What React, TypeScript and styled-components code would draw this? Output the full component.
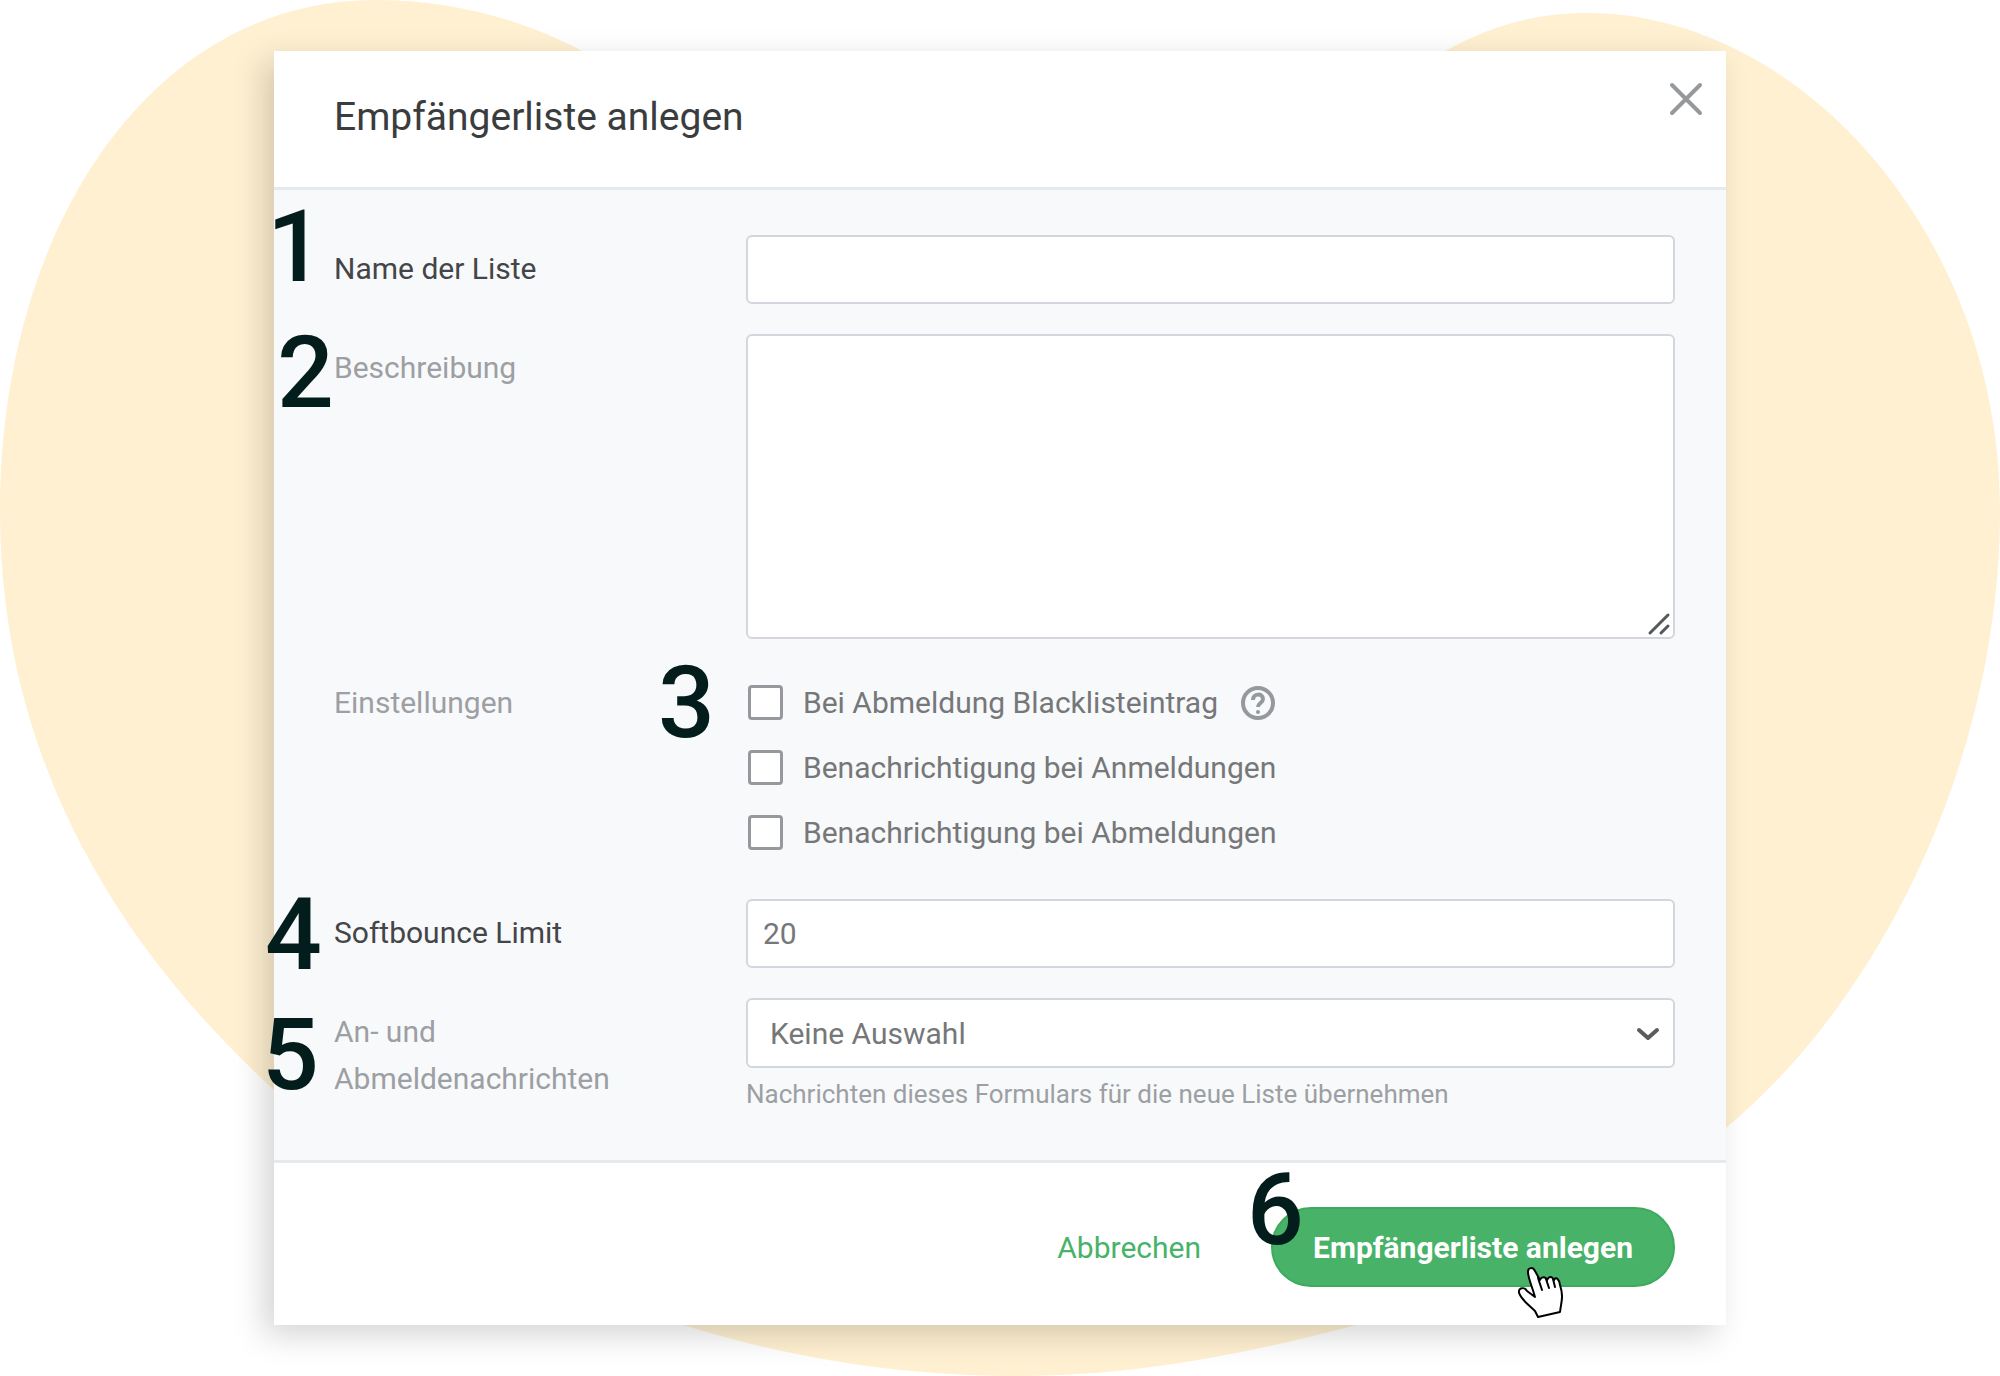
import React from 'react';
import styled, { createGlobalStyle } from 'styled-components';

const GlobalStyle = createGlobalStyle`
  *, *::before, *::after { box-sizing: border-box; }
  body {
    margin: 0;
    background: #fff;
    font-family: Roboto, "Liberation Sans", sans-serif;
    font-size: 30px;
    line-height: 47px;
  }
`;

const Stage = styled.main`
  position: relative;
  min-height: 100vh;
  padding: 51px 24px;
  overflow: hidden;
`;

const Backdrop = styled.svg`
  position: absolute;
  inset: 0;
  width: 100%;
  height: 100%;
`;

const Dialog = styled.section`
  position: relative;
  max-width: 1452px;
  margin: 0 auto;
  background: #fff;
  box-shadow: -10px 10px 30px rgba(0, 0, 0, 0.17);
`;

const Header = styled.header`
  display: flex;
  justify-content: space-between;
  align-items: flex-start;
  padding: 30px 23px 29px 60px;
  border-bottom: 3px solid #e6eaef;
`;

const Title = styled.h1`
  margin: 0;
  padding: 13px 0 17px;
  font-size: 39px;
  font-weight: 400;
  line-height: 47px;
  color: #3a3c3e;
`;

const CloseButton = styled.button`
  display: flex;
  padding: 0;
  border: 0;
  background: none;
  cursor: pointer;
`;

const Form = styled.form`
  margin: 0;
`;

const Fields = styled.div`
  display: flex;
  flex-direction: column;
  gap: 30px;
  padding: 45px 51px 50px 60px;
  background: #f8f9fb;
  border-bottom: 3px solid #e6eaef;
`;

const Row = styled.div`
  position: relative;
  display: grid;
  grid-template-columns: 412px minmax(0, 1fr);
  align-items: start;
`;

const Label = styled.label<{ $required?: boolean }>`
  max-width: 320px;
  padding-top: 10px;
  color: ${(p) => (p.$required ? '#434548' : '#9c9fa3')};
`;

const Control = styled.div`
  position: relative;
  display: flex;
  flex-direction: column;
`;

const fieldLook = `
  width: 100%;
  border: 2px solid #d3d6dc;
  border-radius: 6px;
  background: #fff;
  color: #757779;
  font: inherit;
  outline: none;
`;

const TextInput = styled.input`
  ${fieldLook}
  height: 69px;
  padding: 0 15px;
`;

const TextArea = styled.textarea`
  ${fieldLook}
  display: block;
  height: 305px;
  padding: 10px 15px;
  resize: none;
`;

const Select = styled.select`
  ${fieldLook}
  height: 70px;
  padding: 0 56px 0 22px;
  appearance: none;
`;

const ResizeGrip = styled.svg`
  position: absolute;
  right: 3px;
  bottom: 3px;
`;

const Chevron = styled.svg`
  position: absolute;
  right: 14px;
  top: 28px;
  pointer-events: none;
`;

const Hint = styled.small`
  margin-top: 10px;
  font-size: 26px;
  line-height: 32px;
  color: #9c9fa3;
`;

const Options = styled.div`
  display: flex;
  flex-direction: column;
  gap: 18px;
  padding: 10px 0 13px;
`;

const Option = styled.div`
  display: flex;
  align-items: center;
  gap: 22px;
  color: #757779;
`;

const OptionLabel = styled.label`
  display: flex;
  align-items: center;
  gap: 20px;
`;

const Checkbox = styled.input`
  appearance: none;
  width: 35px;
  height: 35px;
  margin: 0 0 0 2px;
  border: 3px solid #95989c;
  border-radius: 4px;
  background: #fff;
`;

const HelpButton = styled.button`
  display: flex;
  padding: 0;
  border: 0;
  background: none;
`;

const Footer = styled.footer`
  display: flex;
  justify-content: flex-end;
  align-items: center;
  gap: 70px;
  padding: 44px 51px 38px;
`;

const CancelButton = styled.button`
  padding: 0;
  border: 0;
  background: none;
  color: #48b368;
  font: inherit;
`;

const SubmitWrap = styled.div`
  position: relative;
`;

const SubmitButton = styled.button`
  height: 80px;
  padding: 0 40px;
  border: 2px solid #3dab5e;
  border-radius: 40px;
  background: #48b368;
  color: #fff;
  font: inherit;
  font-weight: 700;
`;

const Marker = styled.span<{ $x: number; $y: number }>`
  position: absolute;
  left: ${(p) => p.$x}px;
  top: ${(p) => p.$y}px;
  font-size: 100px;
  font-weight: 500;
  line-height: 72px;
  color: #031c1c;
  pointer-events: none;
`;

const Pointer = styled.svg`
  position: absolute;
  right: 112px;
  top: 60px;
  pointer-events: none;
`;

const options = [
  { id: 'blacklist', text: 'Bei Abmeldung Blacklisteintrag', help: true },
  { id: 'notify-in', text: 'Benachrichtigung bei Anmeldungen', help: false },
  { id: 'notify-out', text: 'Benachrichtigung bei Abmeldungen', help: false },
];

export default function App() {
  return (
    <Stage>
      <GlobalStyle />
      <Backdrop viewBox="0 0 2000 1376" preserveAspectRatio="none" aria-hidden="true">
        <path
          fill="#fff0d1"
          d="M375 0C450 0 520 18 582 51C860 190 1170 190 1445 51C1490 26 1535 13 1587 13C1800 13 2000 235 2000 510C2000 760 1880 1000 1726 1128C1600 1240 1500 1285 1356 1325C1240 1356 1130 1376 1020 1376C900 1376 790 1358 683 1325C530 1270 380 1190 274 1090C100 930 0 740 0 510C0 230 150 0 375 0Z"
        />
      </Backdrop>
      <Dialog role="dialog" aria-labelledby="dialog-title">
        <Header>
          <Title id="dialog-title">Empfängerliste anlegen</Title>
          <CloseButton type="button" aria-label="Schließen">
            <svg width="34" height="36" viewBox="0 0 34 36" fill="none" stroke="#95999c" strokeWidth="4" strokeLinecap="round">
              <path d="M3 4L31 32M31 4L3 32" />
            </svg>
          </CloseButton>
        </Header>
        <Form onSubmit={(e) => e.preventDefault()}>
          <Fields>
            <Row>
              <Marker $x={-67} $y={-24}>1</Marker>
              <Label $required htmlFor="list-name">Name der Liste</Label>
              <Control>
                <TextInput id="list-name" type="text" />
              </Control>
            </Row>
            <Row>
              <Marker $x={-57} $y={3}>2</Marker>
              <Label htmlFor="description">Beschreibung</Label>
              <Control>
                <TextArea id="description" />
                <ResizeGrip width="26" height="26" viewBox="0 0 26 26" fill="none" stroke="#55575a" strokeWidth="3" strokeLinecap="round" aria-hidden="true">
                  <path d="M4 23L22 5M15 23L22 16" />
                </ResizeGrip>
              </Control>
            </Row>
            <Row role="group" aria-labelledby="settings-label">
              <Marker $x={324} $y={-2}>3</Marker>
              <Label as="span" id="settings-label">Einstellungen</Label>
              <Options>
                {options.map((o) => (
                  <Option key={o.id}>
                    <OptionLabel htmlFor={o.id}>
                      <Checkbox id={o.id} type="checkbox" />
                      {o.text}
                    </OptionLabel>
                    {o.help && (
                      <HelpButton type="button" aria-label="Hilfe">
                        <svg width="36" height="36" viewBox="0 0 36 36" fill="none" stroke="#95989c" strokeWidth="4">
                          <circle cx="18" cy="18" r="15" />
                          <path d="M13 15C13 8 23 8 23 14C23 18 18 18 18 22" />
                          <circle cx="18" cy="27" r="2" fill="#95989c" stroke="none" />
                        </svg>
                      </HelpButton>
                    )}
                  </Option>
                ))}
              </Options>
            </Row>
            <Row>
              <Marker $x={-69} $y={0}>4</Marker>
              <Label $required htmlFor="softbounce">Softbounce Limit</Label>
              <Control>
                <TextInput id="softbounce" type="text" inputMode="numeric" defaultValue="20" />
              </Control>
            </Row>
            <Row>
              <Marker $x={-72} $y={21}>5</Marker>
              <Label htmlFor="messages">An- und Abmeldenachrichten</Label>
              <Control>
                <Select id="messages" defaultValue="none" aria-describedby="messages-hint">
                  <option value="none">Keine Auswahl</option>
                </Select>
                <Chevron width="26" height="18" viewBox="0 0 26 18" fill="none" stroke="#5a5c5f" strokeWidth="4" strokeLinecap="round" strokeLinejoin="round" aria-hidden="true">
                  <path d="M4 4L13 12L22 4" />
                </Chevron>
                <Hint id="messages-hint">Nachrichten dieses Formulars für die neue Liste übernehmen</Hint>
              </Control>
            </Row>
          </Fields>
          <Footer>
            <CancelButton type="button">Abbrechen</CancelButton>
            <SubmitWrap>
              <SubmitButton type="submit">Empfängerliste anlegen</SubmitButton>
              <Marker $x={-24} $y={-33}>6</Marker>
              <Pointer width="46" height="52" viewBox="0 0 46 52" fill="#fff" stroke="#000" strokeWidth="2" strokeLinecap="round" strokeLinejoin="round" aria-hidden="true">
                <path d="M21 50L18 44C13 39 6 34 3 28C-1 21 7 19 10 24L18 30C15 19 11 11 11 5C11 0 16 0 18 4L23 13C24 10 28 9 30 13C32 9 35 9 37 13C39 9 42 12 43 18C47 30 44 36 43 45Z" />
                <path d="M21 11L25 23M29 12L32 21M36 12L38 20" fill="none" />
              </Pointer>
            </SubmitWrap>
          </Footer>
        </Form>
      </Dialog>
    </Stage>
  );
}
